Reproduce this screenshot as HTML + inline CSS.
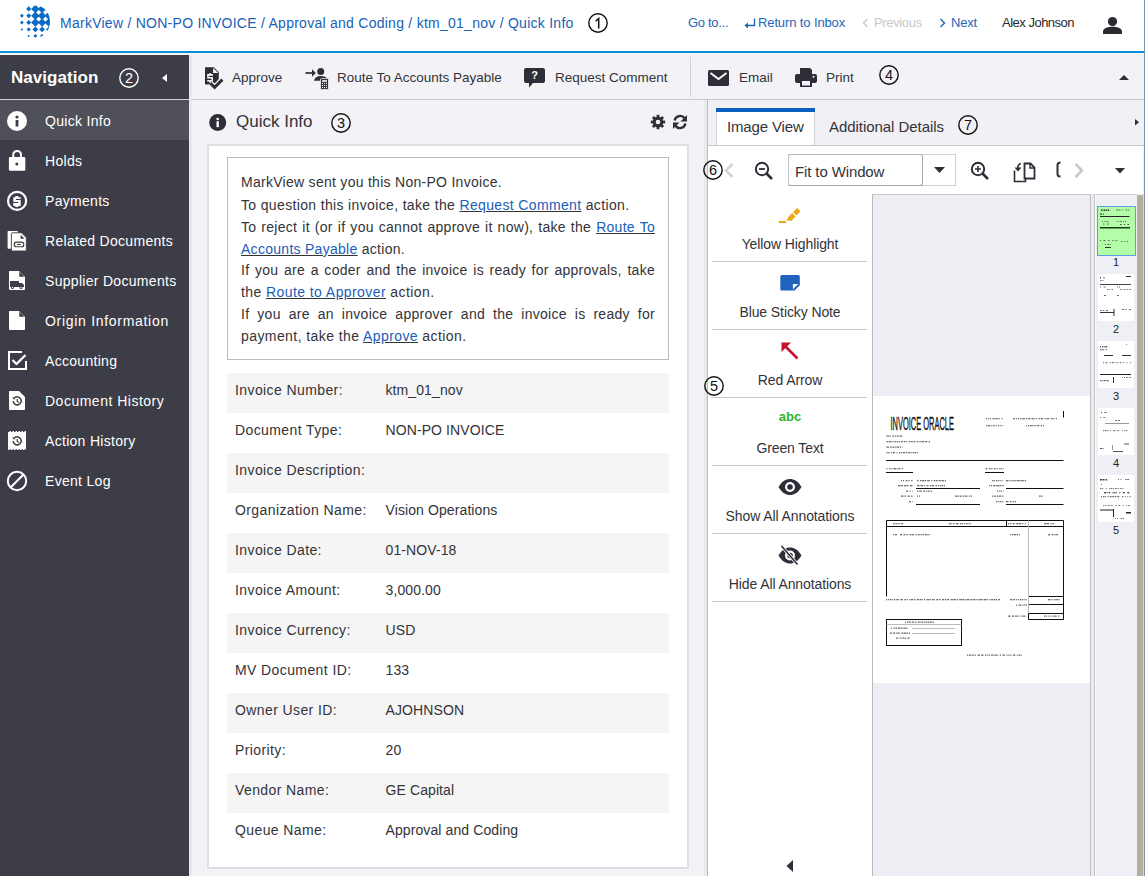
<!DOCTYPE html>
<html><head><meta charset="utf-8">
<style>
*{box-sizing:border-box;margin:0;padding:0}
html,body{width:1145px;height:876px;overflow:hidden;background:#f1f1f6;font-family:"Liberation Sans",sans-serif;color:#333338}
.abs{position:absolute}
.t{position:absolute;white-space:nowrap;line-height:1}
#hdr{position:absolute;left:0;top:0;width:1145px;height:51px;background:#fff}
#hline{position:absolute;left:0;top:51px;width:1145px;height:2px;background:#0a8fdf}
#hline2{position:absolute;left:0;top:53px;width:1145px;height:2px;background:#f7f6f2}
.crumb{color:#1862b6;font-size:14px;letter-spacing:0.26px}
.hl{color:#1e66b8;font-size:13px}
.circ{position:absolute;width:20px;height:20px;border:1.3px solid #111;border-radius:50%;font-size:15px;line-height:18px;text-align:center;color:#111;font-family:"Liberation Sans",sans-serif}
#nav{position:absolute;left:0;top:55px;width:189px;height:821px;background:#3d3d47}
#navh{position:absolute;left:0;top:0;width:189px;height:45px;border-bottom:1px solid #d0d0d4}
.ni{position:absolute;left:0;width:189px;height:40px}
.ni .lbl{position:absolute;left:45px;top:14px;font-size:14px;letter-spacing:0.3px;color:#fff;white-space:nowrap;line-height:1}
.ni svg{position:absolute;left:5px;top:10px}
#tb{position:absolute;left:192px;top:55px;width:953px;height:45px;background:#f2f2f7;border-bottom:1px solid #c9c9cd}
.tbt{position:absolute;top:16px;font-size:13.5px;color:#333338;white-space:nowrap;line-height:1}
#qi{position:absolute;left:189px;top:55px;width:515px;height:821px;background:#f2f2f7}
#qistrip{position:absolute;left:189px;top:55px;width:3px;height:821px;background:#e8e8eb}
#panel{position:absolute;left:207px;top:144px;width:482px;height:725px;background:#fff;border:2px solid #dedee3}
#msg{position:absolute;left:227px;top:157px;width:442px;height:203px;border:1px solid #b9b9bd;background:#fff}
.ml{position:absolute;width:414px;font-size:14px;letter-spacing:0.28px;white-space:nowrap;line-height:1;color:#333338}
.ml.j{text-align:justify;text-align-last:justify}
.ml a{color:#1a5eb8;text-decoration:underline;text-decoration-color:#333;text-underline-offset:1px}
.row{position:absolute;left:227px;width:442px;height:40px}
.row.g{background:#f5f5f5}
.row .k{position:absolute;left:8px;top:10px;font-size:14px;letter-spacing:0.4px;white-space:nowrap;line-height:1;color:#333338}
.row .v{position:absolute;left:158.5px;top:10px;font-size:14px;letter-spacing:0.1px;white-space:nowrap;line-height:1;color:#333338}
.al{left:708px;width:164px;text-align:center;font-size:14px;letter-spacing:-0.1px;color:#333338}
.thl{left:1095px;width:42px;text-align:center;font-size:11px;color:#222}
</style></head><body>
<div id="hdr">
  <svg class="abs" style="left:15px;top:3px" width="40" height="40" viewBox="0 0 40 40">
    <defs><clipPath id="lc"><ellipse cx="20.8" cy="18.6" rx="14.2" ry="16"/></clipPath></defs>
    <g fill="#0b6cc4"><path d="M13.70 3.30L16.30 5.90L13.70 8.50L11.10 5.90ZM6.85 10.85L8.80 12.80L6.85 14.75L4.90 12.80ZM13.70 10.30L16.20 12.80L13.70 15.30L11.20 12.80ZM6.85 17.65L8.80 19.60L6.85 21.55L4.90 19.60ZM13.70 17.10L16.20 19.60L13.70 22.10L11.20 19.60ZM6.85 25.15L8.10 26.40L6.85 27.65L5.60 26.40ZM13.70 24.35L15.75 26.40L13.70 28.45L11.65 26.40ZM13.70 31.90L14.90 33.10L13.70 34.30L12.50 33.10Z"/><path clip-path="url(#lc)" d="M20.35 1.65L24.60 5.90L20.35 10.15L16.10 5.90ZM27.10 1.65L31.35 5.90L27.10 10.15L22.85 5.90ZM33.85 1.65L38.10 5.90L33.85 10.15L29.60 5.90ZM20.35 8.55L24.60 12.80L20.35 17.05L16.10 12.80ZM27.10 8.55L31.35 12.80L27.10 17.05L22.85 12.80ZM33.85 8.55L38.10 12.80L33.85 17.05L29.60 12.80ZM20.35 15.35L24.60 19.60L20.35 23.85L16.10 19.60ZM27.10 15.35L31.35 19.60L27.10 23.85L22.85 19.60ZM33.85 15.35L38.10 19.60L33.85 23.85L29.60 19.60ZM20.35 23.50L23.25 26.40L20.35 29.30L17.45 26.40ZM27.10 23.50L30.00 26.40L27.10 29.30L24.20 26.40ZM33.85 23.50L36.75 26.40L33.85 29.30L30.95 26.40ZM20.35 31.10L22.35 33.10L20.35 35.10L18.35 33.10ZM27.10 30.90L29.30 33.10L27.10 35.30L24.90 33.10Z"/></g>
  </svg>
  <div class="t crumb" style="left:60px;top:16px">MarkView / NON-PO INVOICE / Approval and Coding / ktm_01_nov / Quick Info</div>
  <svg class="abs" style="left:586.9px;top:11.7px" width="22" height="22" viewBox="0 0 22 22"><circle cx="11" cy="11" r="9.2" fill="none" stroke="#111" stroke-width="1.4"/><path d="M8.6 9.3L11.7 6.4V16.6" fill="none" stroke="#111" stroke-width="1.5"/></svg>
  <div class="t hl" style="left:688px;top:16px;letter-spacing:-0.3px">Go to...</div>
  <svg class="abs" style="left:744px;top:18px" width="12" height="12" viewBox="0 0 12 12"><path d="M10.5 0.5V7.5H2.5" fill="none" stroke="#1e66b8" stroke-width="1.4"/><path d="M0.5 7.5L4 4.5V10.5Z" fill="#1e66b8"/></svg>
  <div class="t hl" style="left:758px;top:16px;letter-spacing:-0.12px">Return to Inbox</div>
  <svg class="abs" style="left:862px;top:18px" width="7" height="10" viewBox="0 0 7 10"><path d="M5.5 1L1.5 5L5.5 9" fill="none" stroke="#c8c8cc" stroke-width="1.4"/></svg>
  <div class="t hl" style="left:874px;top:16px;color:#c8c8cc;letter-spacing:-0.35px">Previous</div>
  <svg class="abs" style="left:939px;top:18px" width="7" height="10" viewBox="0 0 7 10"><path d="M1.5 1L5.5 5L1.5 9" fill="none" stroke="#1e66b8" stroke-width="1.4"/></svg>
  <div class="t hl" style="left:951px;top:16px;letter-spacing:-0.2px">Next</div>
  <div class="t" style="left:1002px;top:16px;font-size:13px;color:#2a2a30;letter-spacing:-0.5px">Alex Johnson</div>
  <svg class="abs" style="left:1103px;top:17px" width="19" height="17" viewBox="0 0 19 17"><circle cx="9.5" cy="4.6" r="4.6" fill="#2a2a30"/><path d="M0 17V14.5C0 11.5 4 9.8 9.5 9.8S19 11.5 19 14.5V17Z" fill="#2a2a30"/></svg>
</div>
<div id="hline"></div><div id="hline2"></div>
<div id="qi"></div><div id="qistrip"></div>
<div id="nav">
  <div id="navh">
    <div class="t" style="left:11px;top:14px;font-size:17px;font-weight:bold;color:#fff;letter-spacing:0.05px">Navigation</div>
    <svg class="abs" style="left:117.9px;top:12.0px" width="22" height="22" viewBox="0 0 22 22"><circle cx="11" cy="11" r="9.2" fill="none" stroke="#fff" stroke-width="1.4"/><text x="11" y="16.2" font-family="Liberation Sans" font-size="14.5" fill="#fff" text-anchor="middle">2</text></svg>
    <svg class="abs" style="left:162px;top:19px" width="5" height="8" viewBox="0 0 5 8"><path d="M5 0L0 4L5 8Z" fill="#fff"/></svg>
  </div>
  <div class="ni" style="top:45px;background:#50505a">
    <svg width="24" height="24" viewBox="0 0 24 24"><circle cx="12" cy="11" r="10" fill="#fff"/><rect x="10.6" y="10" width="2.8" height="6.5" fill="#3d3d47"/><circle cx="12" cy="7" r="1.6" fill="#3d3d47"/></svg>
    <div class="lbl">Quick Info</div>
  </div>
  <div class="ni" style="top:85px">
    <svg width="24" height="24" viewBox="0 0 24 24"><path d="M8.2 8V4.8a3.9 3.9 0 0 1 7.8 0V8" fill="none" stroke="#fff" stroke-width="2"/><rect x="3.9" y="7.1" width="16.4" height="13.7" rx="1.3" fill="#fff"/><circle cx="11.8" cy="14" r="1.5" fill="#3d3d47"/></svg>
    <div class="lbl">Holds</div>
  </div>
  <div class="ni" style="top:125px">
    <svg width="24" height="24" viewBox="0 0 24 24"><circle cx="12.1" cy="10.9" r="9.05" fill="none" stroke="#fff" stroke-width="2.2"/><path d="M10.3 5.9H13.4V7.3H15.7V15.9H13.4V17H10.3V15.9H8.3V7.3H10.3Z" fill="#fff"/><rect x="11" y="8.9" width="4.8" height="1.1" fill="#3d3d47"/><rect x="8.2" y="11.9" width="4.9" height="1.1" fill="#3d3d47"/></svg>
    <div class="lbl">Payments</div>
  </div>
  <div class="ni" style="top:165px">
    <svg width="24" height="24" viewBox="0 0 24 24"><rect x="2.6" y="1" width="10.3" height="17.8" rx="0.8" fill="#fff"/><path d="M7.2 2.8H16.5L21.3 7.6V20.2a0.8 0.8 0 0 1-0.8 0.8H7.2a0.8 0.8 0 0 1-0.8-0.8V3.6a0.8 0.8 0 0 1 0.8-0.8Z" fill="#fff" stroke="#3d3d47" stroke-width="0.9"/><path d="M15.6 4.7V8.8H19.5Z" fill="#3d3d47"/><rect x="9.2" y="12.1" width="9.6" height="4.6" rx="2.3" fill="none" stroke="#3d3d47" stroke-width="1.1"/><path d="M12 14.4H15.8" stroke="#3d3d47" stroke-width="1.1"/></svg>
    <div class="lbl">Related Documents</div>
  </div>
  <div class="ni" style="top:205px">
    <svg width="24" height="24" viewBox="0 0 24 24"><path d="M4 1H14L20 7V19a1 1 0 0 1-1 1H5a1 1 0 0 1-1-1Z" fill="#fff"/><path d="M14.3 1.6L19.4 6.7H14.3Z" fill="#3d3d47"/><path d="M5 11H14V17H5Z" fill="#3d3d47"/><path d="M14 13H17L19 15V17H14Z" fill="#3d3d47"/><circle cx="7.5" cy="17.5" r="1.6" fill="#3d3d47"/><circle cx="16" cy="17.5" r="1.6" fill="#3d3d47"/><circle cx="7.5" cy="17.5" r="0.7" fill="#fff"/><circle cx="16" cy="17.5" r="0.7" fill="#fff"/></svg>
    <div class="lbl">Supplier Documents</div>
  </div>
  <div class="ni" style="top:245px">
    <svg width="24" height="24" viewBox="0 0 24 24"><path d="M4 1H14L20 7V19a1 1 0 0 1-1 1H5a1 1 0 0 1-1-1Z" fill="#fff"/><path d="M14.3 1.6L19.4 6.7H14.3Z" fill="#3d3d47"/></svg>
    <div class="lbl" style="letter-spacing:0.7px">Origin Information</div>
  </div>
  <div class="ni" style="top:285px">
    <svg width="24" height="24" viewBox="0 0 24 24"><path d="M17 2H4V19H21V11" fill="none" stroke="#fff" stroke-width="2"/><path d="M7.5 10L11.5 14L20.5 5" fill="none" stroke="#fff" stroke-width="2.2"/></svg>
    <div class="lbl">Accounting</div>
  </div>
  <div class="ni" style="top:325px">
    <svg width="24" height="24" viewBox="0 0 24 24"><path d="M4 1H14L20 7V19a1 1 0 0 1-1 1H5a1 1 0 0 1-1-1Z" fill="#fff"/><path d="M8.2 11a4 4 0 1 0 1.2-3" fill="none" stroke="#3d3d47" stroke-width="1.5"/><path d="M7 7.5L9.8 7.2L9.5 10Z" fill="#3d3d47"/><path d="M12.2 9V11.5L14 12.5" fill="none" stroke="#3d3d47" stroke-width="1.2"/></svg>
    <div class="lbl" style="letter-spacing:0.5px">Document History</div>
  </div>
  <div class="ni" style="top:365px">
    <svg width="24" height="24" viewBox="0 0 24 24"><path d="M3 1H21V20H3Z" fill="#fff"/><path d="M3 1h1.5v1H3ZM6 1h1.5v1H6ZM9 1h1.5v1H9ZM12 1h1.5v1H12ZM15 1h1.5v1H15ZM18 1h1.5v1H18ZM4.5 19.2h1.5v0.8H4.5ZM7.5 19.2h1.5v0.8H7.5ZM10.5 19.2h1.5v0.8h-1.5ZM13.5 19.2h1.5v0.8h-1.5ZM16.5 19.2h1.5v0.8h-1.5ZM19.5 19.2h1.5v0.8h-1.5Z" fill="#3d3d47"/><path d="M8.2 11a4 4 0 1 0 1.2-3" fill="none" stroke="#3d3d47" stroke-width="1.5"/><path d="M7 7.5L9.8 7.2L9.5 10Z" fill="#3d3d47"/><path d="M12.2 9V11.5L14 12.5" fill="none" stroke="#3d3d47" stroke-width="1.2"/></svg>
    <div class="lbl">Action History</div>
  </div>
  <div class="ni" style="top:405px">
    <svg width="24" height="24" viewBox="0 0 24 24"><circle cx="12" cy="11" r="9.2" fill="none" stroke="#fff" stroke-width="2"/><path d="M5.8 17.2L18.2 4.8" stroke="#fff" stroke-width="2"/></svg>
    <div class="lbl">Event Log</div>
  </div>
</div>
<div id="tb">
  <svg class="abs" style="left:12px;top:12px" width="22" height="24" viewBox="0 0 22 24"><path d="M1 0.2H9.7L14.8 5.2V17.6H1Z" fill="#2e2e38"/><path d="M9.1 0.9V6.1H14.2Z" fill="#fff"/><path d="M5.4 6H6.8V7.1H8.9V8.7H4.6V10H8.9V14.6H6.8V15.8H5.4V14.6H3.2V13H7.4V11.6H3.2V7.1H5.4Z" fill="#fff"/><path d="M6.4 16.2L10.6 20.4L18.4 12.6" fill="none" stroke="#f2f2f7" stroke-width="5.6"/><path d="M6.4 16.2L10.6 20.4L18.4 12.6" fill="none" stroke="#2e2e38" stroke-width="2.9"/></svg>
  <div class="tbt" style="left:40px">Approve</div>
  <svg class="abs" style="left:113px;top:11px" width="25" height="24" viewBox="0 0 25 24"><path d="M0.5 7H8" stroke="#2e2e38" stroke-width="1.7"/><path d="M7 3.3L10.8 7L7 10.7Z" fill="#2e2e38"/><circle cx="15.7" cy="5.4" r="3.5" fill="#2e2e38"/><path d="M9 14.8C9.5 11.5 12 10 15.5 10S21.5 11 22.5 13V14.8Z" fill="#2e2e38"/><rect x="15.5" y="12.6" width="8" height="10.8" rx="0.8" fill="#2e2e38" stroke="#f2f2f7" stroke-width="0.8"/><rect x="17.1" y="14.2" width="4.8" height="1.6" fill="#fff"/><rect x="16.95" y="16.85" width="1.1" height="1.1" fill="#f2f2f7"/><rect x="18.85" y="16.85" width="1.1" height="1.1" fill="#f2f2f7"/><rect x="20.85" y="16.85" width="1.1" height="1.1" fill="#f2f2f7"/><rect x="16.95" y="18.95" width="1.1" height="1.1" fill="#f2f2f7"/><rect x="18.85" y="18.95" width="1.1" height="1.1" fill="#f2f2f7"/><rect x="20.85" y="18.95" width="1.1" height="1.1" fill="#f2f2f7"/><rect x="16.95" y="20.95" width="1.1" height="1.1" fill="#f2f2f7"/><rect x="18.85" y="20.95" width="1.1" height="1.1" fill="#f2f2f7"/><rect x="20.85" y="20.95" width="1.1" height="1.1" fill="#f2f2f7"/></svg>
  <div class="tbt" style="left:145px">Route To Accounts Payable</div>
  <svg class="abs" style="left:332px;top:13px" width="22" height="21" viewBox="0 0 22 21"><path d="M2 0H19a2 2 0 0 1 2 2V13a2 2 0 0 1-2 2H9L5 19.5V15H2a2 2 0 0 1-2-2V2a2 2 0 0 1 2-2Z" fill="#2e2e38"/><text x="10.5" y="11" font-family="Liberation Sans" font-weight="bold" font-size="11" fill="#fff" text-anchor="middle">?</text></svg>
  <div class="tbt" style="left:363px">Request Comment</div>
  <div class="abs" style="left:498px;top:2px;width:1px;height:40px;background:#d2d2d6"></div>
  <svg class="abs" style="left:516px;top:15px" width="21" height="16" viewBox="0 0 21 16"><rect x="0" y="0" width="21" height="16" rx="1.5" fill="#2e2e38"/><path d="M2.5 3L10.5 9L18.5 3" fill="none" stroke="#fff" stroke-width="1.8"/></svg>
  <div class="tbt" style="left:547px">Email</div>
  <svg class="abs" style="left:603px;top:13px" width="22" height="19" viewBox="0 0 22 19"><path d="M5 0H15L17 2V6H5Z" fill="#2e2e38"/><rect x="0" y="6" width="22" height="9" rx="2" fill="#2e2e38"/><rect x="5" y="12" width="12" height="7" fill="#2e2e38"/><rect x="7" y="13" width="8" height="4.5" fill="#f2f2f7"/><circle cx="18.5" cy="8.8" r="1" fill="#f2f2f7"/></svg>
  <div class="tbt" style="left:634px">Print</div>
  <svg class="abs" style="left:685.9px;top:9.0px" width="22" height="22" viewBox="0 0 22 22"><circle cx="11" cy="11" r="9.2" fill="none" stroke="#111" stroke-width="1.4"/><text x="11" y="16.2" font-family="Liberation Sans" font-size="14.5" fill="#111" text-anchor="middle">4</text></svg>
  <svg class="abs" style="left:927px;top:20px" width="10" height="5" viewBox="0 0 10 5"><path d="M0 5L5 0L10 5Z" fill="#2e2e38"/></svg>
</div>
<svg class="abs" style="left:209px;top:114px" width="18" height="18" viewBox="0 0 18 18"><circle cx="8.7" cy="8.5" r="8.5" fill="#2e2e38"/><rect x="7.5" y="7.3" width="2.4" height="5.8" fill="#fff"/><circle cx="8.7" cy="5" r="1.35" fill="#fff"/></svg>
<div class="t" style="left:236px;top:113px;font-size:17px;color:#333338">Quick Info</div>
<svg class="abs" style="left:330.0px;top:111.6px" width="22" height="22" viewBox="0 0 22 22"><circle cx="11" cy="11" r="9.2" fill="none" stroke="#111" stroke-width="1.4"/><text x="11" y="16.2" font-family="Liberation Sans" font-size="14.5" fill="#111" text-anchor="middle">3</text></svg>
<svg class="abs" style="left:650px;top:114px" width="16" height="16" viewBox="0 0 16 16"><g fill="#2e2e38"><circle cx="8" cy="8" r="5.2"/><rect x="6.6" y="0.8" width="2.8" height="14.4"/><rect x="6.6" y="0.8" width="2.8" height="14.4" transform="rotate(45 8 8)"/><rect x="6.6" y="0.8" width="2.8" height="14.4" transform="rotate(90 8 8)"/><rect x="6.6" y="0.8" width="2.8" height="14.4" transform="rotate(135 8 8)"/></g><circle cx="8" cy="8" r="2.3" fill="#f2f2f7"/></svg>
<svg class="abs" style="left:672px;top:114px" width="16" height="16" viewBox="0 0 16 16"><path d="M2.6 6.5A5.6 5.6 0 0 1 12.6 4.2" fill="none" stroke="#2e2e38" stroke-width="2.4"/><path d="M15 1V7.5H8.5Z" fill="#2e2e38"/><path d="M13.4 9.5A5.6 5.6 0 0 1 3.4 11.8" fill="none" stroke="#2e2e38" stroke-width="2.4"/><path d="M1 15V8.5H7.5Z" fill="#2e2e38"/></svg>
<div id="panel"></div>
<div id="msg"></div>
<div class="ml" style="left:241px;top:175.4px">MarkView sent you this Non-PO Invoice.</div>
<div class="ml" style="left:241px;top:197.6px;letter-spacing:0.35px">To question this invoice, take the <a>Request Comment</a> action.</div>
<div class="ml j" style="left:241px;top:220.3px">To reject it (or if you cannot approve it now), take the <a>Route To</a></div>
<div class="ml" style="left:241px;top:241.5px"><a>Accounts Payable</a> action.</div>
<div class="ml j" style="left:241px;top:263.2px">If you are a coder and the invoice is ready for approvals, take</div>
<div class="ml" style="left:241px;top:285.1px;letter-spacing:0.42px">the <a>Route to Approver</a> action.</div>
<div class="ml j" style="left:241px;top:307.4px">If you are an invoice approver and the invoice is ready for</div>
<div class="ml" style="left:241px;top:329px;letter-spacing:0.42px">payment, take the <a>Approve</a> action.</div>

<div class="row g" style="top:373px"><div class="k">Invoice Number:</div><div class="v">ktm_01_nov</div></div>
<div class="row" style="top:413px"><div class="k">Document Type:</div><div class="v">NON-PO INVOICE</div></div>
<div class="row g" style="top:453px"><div class="k">Invoice Description:</div></div>
<div class="row" style="top:493px"><div class="k">Organization Name:</div><div class="v">Vision Operations</div></div>
<div class="row g" style="top:533px"><div class="k">Invoice Date:</div><div class="v">01-NOV-18</div></div>
<div class="row" style="top:573px"><div class="k">Invoice Amount:</div><div class="v">3,000.00</div></div>
<div class="row g" style="top:613px"><div class="k">Invoice Currency:</div><div class="v">USD</div></div>
<div class="row" style="top:653px"><div class="k">MV Document ID:</div><div class="v">133</div></div>
<div class="row g" style="top:693px"><div class="k">Owner User ID:</div><div class="v">AJOHNSON</div></div>
<div class="row" style="top:733px"><div class="k">Priority:</div><div class="v">20</div></div>
<div class="row g" style="top:773px"><div class="k">Vendor Name:</div><div class="v">GE Capital</div></div>
<div class="row" style="top:813px"><div class="k">Queue Name:</div><div class="v">Approval and Coding</div></div>
<div class="abs" style="left:704px;top:100px;width:441px;height:776px;background:#f0f0f5"></div>
<div class="abs" style="left:704px;top:100px;width:3px;height:776px;background:#e9e9ea"></div>
<div class="abs" style="left:707px;top:100px;width:1px;height:776px;background:#bdbdc1"></div>
<div class="abs" style="left:708px;top:145px;width:437px;height:1px;background:#c8c8cc"></div>
<div class="abs" style="left:716px;top:108px;width:99px;height:37px;background:#fff;border-left:1px solid #d4d4d8;border-right:1px solid #d4d4d8"></div>
<div class="abs" style="left:716px;top:108px;width:99px;height:3.5px;background:#0b5fc1"></div>
<div class="t" style="left:727px;top:119px;font-size:15px;letter-spacing:-0.15px;color:#333338">Image View</div>
<div class="t" style="left:829px;top:119px;font-size:15px;letter-spacing:-0.05px;color:#333338">Additional Details</div>
<svg class="abs" style="left:956.7px;top:113.9px" width="22" height="22" viewBox="0 0 22 22"><circle cx="11" cy="11" r="9.2" fill="none" stroke="#111" stroke-width="1.4"/><text x="11" y="16.2" font-family="Liberation Sans" font-size="14.5" fill="#111" text-anchor="middle">7</text></svg>
<svg class="abs" style="left:1134.5px;top:119px" width="4" height="6.5" viewBox="0 0 4 6.5"><path d="M0 0L4 3.25L0 6.5Z" fill="#2e2e38"/></svg>
<!-- image toolbar -->
<div class="abs" style="left:708px;top:146px;width:435px;height:48px;background:#fff"></div>
<svg class="abs" style="left:701.8px;top:158.9px" width="22" height="22" viewBox="0 0 22 22"><circle cx="11" cy="11" r="9.2" fill="none" stroke="#111" stroke-width="1.4"/><text x="11" y="16.2" font-family="Liberation Sans" font-size="14.5" fill="#111" text-anchor="middle">6</text></svg>
<svg class="abs" style="left:723px;top:163px" width="11" height="15" viewBox="0 0 11 15"><path d="M9.5 1L3 7.5L9.5 14" fill="none" stroke="#d4d4d8" stroke-width="2.6"/></svg>
<svg class="abs" style="left:754px;top:161px" width="20" height="20" viewBox="0 0 20 20"><circle cx="8" cy="8" r="6.2" fill="none" stroke="#2e2e38" stroke-width="2"/><path d="M5 8H11" stroke="#2e2e38" stroke-width="1.8"/><path d="M12.5 12.5L18 18" stroke="#2e2e38" stroke-width="2.6"/></svg>
<div class="abs" style="left:788px;top:154px;width:168px;height:32px;border:1px solid #d0d0d4;background:#fff"></div>
<div class="abs" style="left:788px;top:154px;width:135px;height:32px;border:1.5px solid #a8a8ac;border-radius:3px;border-top-color:#b8b8bc;border-left-color:#c4c4c8"></div>
<div class="t" style="left:795px;top:164px;font-size:15px;letter-spacing:-0.12px;color:#333338">Fit to Window</div>
<svg class="abs" style="left:934px;top:167px" width="11" height="7" viewBox="0 0 11 7"><path d="M0 0H11L5.5 6Z" fill="#2e2e38"/></svg>
<svg class="abs" style="left:970px;top:161px" width="20" height="20" viewBox="0 0 20 20"><circle cx="8" cy="8" r="6.2" fill="none" stroke="#2e2e38" stroke-width="2"/><path d="M5 8H11M8 5V11" stroke="#2e2e38" stroke-width="1.6"/><path d="M12.5 12.5L18 18" stroke="#2e2e38" stroke-width="2.6"/></svg>
<svg class="abs" style="left:1013px;top:159px" width="24" height="24" viewBox="0 0 24 24"><path d="M1.5 11.5V22.5H12.5V20" fill="none" stroke="#2e2e38" stroke-width="1.6"/><path d="M8 4.5a4 4 0 0 0 -3 5" fill="none" stroke="#2e2e38" stroke-width="1.6"/><path d="M1.5 8.5H8.5L5 12.5Z" fill="#2e2e38"/><path d="M11.5 4.5H17.5L21.5 8.5V19.5H11.5Z" fill="none" stroke="#2e2e38" stroke-width="1.8"/><path d="M17 4.5V9H21.5" fill="none" stroke="#2e2e38" stroke-width="1.4"/></svg>
<svg class="abs" style="left:1056px;top:161px" width="6" height="17" viewBox="0 0 6 17"><path d="M4.5 1.5Q1.5 1.5 1.5 4V13Q1.5 15.5 4.5 15.5" fill="none" stroke="#2e2e38" stroke-width="2"/></svg>
<svg class="abs" style="left:1074px;top:163px" width="11" height="15" viewBox="0 0 11 15"><path d="M1.5 1L8 7.5L1.5 14" fill="none" stroke="#c8c8cc" stroke-width="2.6"/></svg>
<svg class="abs" style="left:1115px;top:168px" width="10" height="6" viewBox="0 0 10 6"><path d="M0 0H10L5 5.5Z" fill="#2e2e38"/></svg>
<!-- annotation column -->
<div class="abs" style="left:708px;top:194px;width:164px;height:682px;background:#fff"></div>
<div class="abs" style="left:712px;top:261px;width:155px;height:1px;background:#c6c6ca"></div>
<div class="abs" style="left:712px;top:329px;width:155px;height:1px;background:#c6c6ca"></div>
<div class="abs" style="left:712px;top:397px;width:155px;height:1px;background:#c6c6ca"></div>
<div class="abs" style="left:712px;top:465px;width:155px;height:1px;background:#c6c6ca"></div>
<div class="abs" style="left:712px;top:533px;width:155px;height:1px;background:#c6c6ca"></div>
<div class="abs" style="left:712px;top:601px;width:155px;height:1px;background:#c6c6ca"></div>
<svg class="abs" style="left:778px;top:207px" width="24" height="17" viewBox="0 0 24 17"><g fill="#eaa912"><path d="M0.8 14.1H7.6L8.4 15.9H0.8Z"/><path d="M8 13.6L10 11.6V10.2L14.1 6.1L17.5 9.5L13.6 13.8Z"/><path d="M15 5.1L19.1 1L22.5 4.3L18.4 8.4Z"/></g></svg>
<div class="t al" style="top:237px">Yellow Highlight</div>
<svg class="abs" style="left:780px;top:274px" width="21" height="18" viewBox="0 0 21 18"><path d="M1.8 1H18.3a1.5 1.5 0 0 1 1.5 1.5V11.2L14.5 16.5H1.8a1.5 1.5 0 0 1-1.5-1.5V2.5a1.5 1.5 0 0 1 1.5-1.5Z" fill="#1f63bd"/><path d="M12.9 9.9V15.2L18.2 9.9Z" fill="#fff"/></svg>
<div class="t al" style="top:305px">Blue Sticky Note</div>
<svg class="abs" style="left:781px;top:342px" width="18" height="18" viewBox="0 0 18 18"><path d="M3 3L16.5 16.5" stroke="#c41230" stroke-width="2.6"/><path d="M0.5 0.5H10L0.5 10Z" fill="#c41230"/></svg>
<div class="t al" style="top:373px">Red Arrow</div>
<svg class="abs" style="left:703.0px;top:375.3px" width="22" height="22" viewBox="0 0 22 22"><circle cx="11" cy="11" r="9.2" fill="none" stroke="#111" stroke-width="1.4"/><text x="11" y="16.2" font-family="Liberation Sans" font-size="14.5" fill="#111" text-anchor="middle">5</text></svg>
<div class="t" style="left:708px;width:164px;text-align:center;top:410px;font-size:13px;font-weight:bold;color:#2db52d">abc</div>
<div class="t al" style="top:441px">Green Text</div>
<svg class="abs" style="left:778px;top:478px" width="24" height="18" viewBox="0 0 24 18"><path d="M0.5 9C4 3 8 1 12 1S20 3 23.5 9C20 15 16 17 12 17S4 15 0.5 9Z" fill="#2e2e38"/><circle cx="12" cy="9" r="5" fill="#fff"/><circle cx="12" cy="9" r="2.8" fill="#2e2e38"/></svg>
<div class="t al" style="top:509px">Show All Annotations</div>
<svg class="abs" style="left:778px;top:545px" width="24" height="21" viewBox="0 0 24 21"><path d="M0.5 10.5C4 4.5 8 2.5 12 2.5S20 4.5 23.5 10.5C20 16.5 16 18.5 12 18.5S4 16.5 0.5 10.5Z" fill="#2e2e38"/><circle cx="12" cy="10.5" r="5" fill="#fff"/><circle cx="12" cy="10.5" r="2.8" fill="#2e2e38"/><path d="M3.5 1L19.5 19.5" stroke="#fff" stroke-width="3.2"/><path d="M3.5 1L19.5 19.5" stroke="#2e2e38" stroke-width="1.6"/></svg>
<div class="t al" style="top:577px">Hide All Annotations</div>
<svg class="abs" style="left:786px;top:860px" width="7" height="12" viewBox="0 0 7 12"><path d="M7 0L0.5 6L7 12Z" fill="#2e2e38"/></svg>
<!-- viewport -->
<div class="abs" style="left:872px;top:194px;width:219px;height:682px;background:#eceef3;border-left:1px solid #b8b8bc;border-top:1px solid #c8c8cc;border-right:1px solid #c0c0c4"></div>
<div class="abs" style="left:1091px;top:194px;width:3px;height:682px;background:#ececee"></div>
<div class="abs" style="left:1094px;top:194px;width:1px;height:682px;background:#c4c4c8"></div>
<div class="abs" style="left:1095px;top:194px;width:42px;height:682px;background:#eef0f5;border-top:1px solid #d0d0d4;border-left:1px solid #fafafa"></div>
<div class="abs" style="left:1137px;top:195px;width:6px;height:681px;background:#b7af9d"></div>
<div class="abs" style="left:1143px;top:194px;width:1px;height:682px;background:#d8d8dc"></div><div class="abs" style="left:1144px;top:0px;width:1px;height:876px;background:#7d91ae"></div>
<svg class="abs" style="left:873px;top:396px" width="217" height="287" viewBox="873 396 217 287">
<rect x="873" y="396" width="217" height="287" fill="#fff"/>
<text x="890.5" y="429.6" font-family="Liberation Sans" font-size="17.5" textLength="63.5" lengthAdjust="spacingAndGlyphs" fill="#111" stroke="#111" stroke-width="0.35">INVOICE ORACLE</text>
<g fill="#222" opacity="0.65"><rect x="986.0" y="418.0" width="1.0" height="1.3"/><rect x="987.8" y="418.0" width="1.0" height="1.3"/><rect x="989.8" y="418.0" width="1.2" height="1.3"/><rect x="992.5" y="418.0" width="2.0" height="1.3"/><rect x="995.3" y="418.0" width="2.5" height="1.3"/><rect x="998.6" y="418.0" width="1.2" height="1.3"/><rect x="1001.3" y="418.0" width="1.2" height="1.3"/></g>
<g fill="#222" opacity="0.65"><rect x="986.0" y="425.0" width="1.0" height="1.3"/><rect x="987.8" y="425.0" width="2.5" height="1.3"/><rect x="991.3" y="425.0" width="1.0" height="1.3"/><rect x="993.3" y="425.0" width="1.5" height="1.3"/><rect x="995.6" y="425.0" width="1.0" height="1.3"/><rect x="998.1" y="425.0" width="1.2" height="1.3"/><rect x="1000.3" y="425.0" width="1.0" height="1.3"/><rect x="1002.3" y="425.0" width="0.7" height="1.3"/></g>
<g fill="#222" opacity="0.65"><rect x="1013.0" y="418.0" width="2.0" height="1.3"/><rect x="1016.0" y="418.0" width="1.0" height="1.3"/><rect x="1018.0" y="418.0" width="1.0" height="1.3"/><rect x="1020.0" y="418.0" width="1.5" height="1.3"/><rect x="1022.3" y="418.0" width="2.5" height="1.3"/><rect x="1025.8" y="418.0" width="1.2" height="1.3"/><rect x="1027.8" y="418.0" width="2.5" height="1.3"/><rect x="1031.3" y="418.0" width="2.5" height="1.3"/><rect x="1034.3" y="418.0" width="1.0" height="1.3"/><rect x="1036.1" y="418.0" width="1.0" height="1.3"/><rect x="1038.6" y="418.0" width="1.5" height="1.3"/><rect x="1040.6" y="418.0" width="2.5" height="1.3"/><rect x="1044.6" y="418.0" width="1.2" height="1.3"/><rect x="1046.6" y="418.0" width="2.5" height="1.3"/><rect x="1050.6" y="418.0" width="1.0" height="1.3"/><rect x="1052.1" y="418.0" width="1.0" height="1.3"/><rect x="1053.6" y="418.0" width="1.0" height="1.3"/><rect x="1056.1" y="418.0" width="0.9" height="1.3"/></g>
<g fill="#222" opacity="0.65"><rect x="1026.0" y="425.0" width="1.0" height="1.3"/><rect x="1028.0" y="425.0" width="1.5" height="1.3"/><rect x="1030.3" y="425.0" width="2.5" height="1.3"/><rect x="1033.8" y="425.0" width="1.2" height="1.3"/><rect x="1035.5" y="425.0" width="1.0" height="1.3"/><rect x="1037.3" y="425.0" width="2.0" height="1.3"/><rect x="1040.8" y="425.0" width="1.2" height="1.3"/><rect x="1042.8" y="425.0" width="1.2" height="1.3"/></g>
<g fill="#222" opacity="0.65"><rect x="886.5" y="435.5" width="2.5" height="1.3"/><rect x="889.5" y="435.5" width="1.2" height="1.3"/><rect x="892.2" y="435.5" width="1.5" height="1.3"/><rect x="894.7" y="435.5" width="1.2" height="1.3"/><rect x="896.7" y="435.5" width="2.0" height="1.3"/><rect x="899.7" y="435.5" width="2.5" height="1.3"/></g>
<g fill="#222" opacity="0.65"><rect x="886.5" y="441.0" width="2.0" height="1.3"/><rect x="889.0" y="441.0" width="2.5" height="1.3"/><rect x="892.5" y="441.0" width="1.0" height="1.3"/><rect x="894.5" y="441.0" width="1.5" height="1.3"/><rect x="896.5" y="441.0" width="1.2" height="1.3"/><rect x="898.5" y="441.0" width="1.5" height="1.3"/><rect x="901.0" y="441.0" width="2.0" height="1.3"/><rect x="904.0" y="441.0" width="1.5" height="1.3"/><rect x="906.3" y="441.0" width="1.0" height="1.3"/><rect x="908.8" y="441.0" width="1.5" height="1.3"/><rect x="911.1" y="441.0" width="1.5" height="1.3"/><rect x="913.4" y="441.0" width="2.0" height="1.3"/><rect x="916.9" y="441.0" width="1.5" height="1.3"/><rect x="919.4" y="441.0" width="1.2" height="1.3"/><rect x="921.4" y="441.0" width="2.5" height="1.3"/><rect x="924.7" y="441.0" width="2.5" height="1.3"/><rect x="928.7" y="441.0" width="1.3" height="1.3"/></g>
<g fill="#222" opacity="0.65"><rect x="886.5" y="446.5" width="2.5" height="1.3"/><rect x="890.0" y="446.5" width="1.5" height="1.3"/><rect x="892.3" y="446.5" width="2.0" height="1.3"/><rect x="895.1" y="446.5" width="1.0" height="1.3"/><rect x="896.6" y="446.5" width="2.5" height="1.3"/><rect x="899.9" y="446.5" width="1.2" height="1.3"/><rect x="902.1" y="446.5" width="0.4" height="1.3"/></g>
<g fill="#222" opacity="0.65"><rect x="886.5" y="452.0" width="1.2" height="1.3"/><rect x="888.2" y="452.0" width="1.5" height="1.3"/><rect x="891.2" y="452.0" width="1.0" height="1.3"/><rect x="893.0" y="452.0" width="2.0" height="1.3"/><rect x="896.5" y="452.0" width="1.0" height="1.3"/><rect x="899.0" y="452.0" width="1.0" height="1.3"/><rect x="900.5" y="452.0" width="1.5" height="1.3"/><rect x="902.8" y="452.0" width="2.5" height="1.3"/><rect x="906.1" y="452.0" width="1.0" height="1.3"/><rect x="907.9" y="452.0" width="2.0" height="1.3"/><rect x="910.7" y="452.0" width="1.0" height="1.3"/><rect x="912.5" y="452.0" width="1.2" height="1.3"/><rect x="914.2" y="452.0" width="2.0" height="1.3"/><rect x="917.2" y="452.0" width="0.8" height="1.3"/></g>
<g fill="#222" opacity="0.65"><rect x="886.5" y="468.0" width="1.0" height="1.3"/><rect x="889.0" y="468.0" width="1.5" height="1.3"/><rect x="891.5" y="468.0" width="1.0" height="1.3"/><rect x="893.5" y="468.0" width="2.5" height="1.3"/><rect x="896.5" y="468.0" width="1.0" height="1.3"/><rect x="898.3" y="468.0" width="2.0" height="1.3"/><rect x="901.8" y="468.0" width="1.2" height="1.3"/></g>
<g fill="#222" opacity="0.65"><rect x="985.5" y="468.0" width="2.0" height="1.3"/><rect x="989.0" y="468.0" width="1.5" height="1.3"/><rect x="991.3" y="468.0" width="1.2" height="1.3"/><rect x="994.0" y="468.0" width="1.5" height="1.3"/><rect x="996.5" y="468.0" width="1.2" height="1.3"/><rect x="999.2" y="468.0" width="1.2" height="1.3"/><rect x="1000.9" y="468.0" width="1.2" height="1.3"/><rect x="1002.9" y="468.0" width="0.6" height="1.3"/></g>
<g fill="#222" opacity="0.65"><rect x="901.0" y="480.0" width="1.0" height="1.3"/><rect x="903.0" y="480.0" width="1.0" height="1.3"/><rect x="905.5" y="480.0" width="2.0" height="1.3"/><rect x="908.5" y="480.0" width="1.2" height="1.3"/><rect x="911.2" y="480.0" width="1.3" height="1.3"/></g>
<g fill="#222" opacity="0.65"><rect x="898.0" y="485.0" width="2.0" height="1.3"/><rect x="900.5" y="485.0" width="2.5" height="1.3"/><rect x="904.0" y="485.0" width="2.0" height="1.3"/><rect x="906.5" y="485.0" width="2.0" height="1.3"/><rect x="910.0" y="485.0" width="2.5" height="1.3"/></g>
<g fill="#222" opacity="0.65"><rect x="906.0" y="490.5" width="2.0" height="1.3"/><rect x="909.5" y="490.5" width="1.0" height="1.3"/><rect x="912.0" y="490.5" width="0.5" height="1.3"/></g>
<g fill="#222" opacity="0.65"><rect x="901.0" y="495.5" width="2.5" height="1.3"/><rect x="904.5" y="495.5" width="1.5" height="1.3"/><rect x="907.5" y="495.5" width="2.5" height="1.3"/><rect x="911.0" y="495.5" width="1.5" height="1.3"/></g>
<g fill="#222" opacity="0.65"><rect x="909.0" y="501.0" width="2.0" height="1.3"/><rect x="912.0" y="501.0" width="0.5" height="1.3"/></g>
<g fill="#222" opacity="0.65"><rect x="917.0" y="480.0" width="1.5" height="1.3"/><rect x="920.0" y="480.0" width="1.5" height="1.3"/><rect x="922.0" y="480.0" width="2.5" height="1.3"/><rect x="925.0" y="480.0" width="1.2" height="1.3"/><rect x="927.2" y="480.0" width="2.5" height="1.3"/><rect x="931.2" y="480.0" width="1.0" height="1.3"/><rect x="933.7" y="480.0" width="1.5" height="1.3"/><rect x="935.7" y="480.0" width="2.0" height="1.3"/><rect x="938.7" y="480.0" width="2.0" height="1.3"/><rect x="941.5" y="480.0" width="2.5" height="1.3"/><rect x="944.8" y="480.0" width="1.2" height="1.3"/></g>
<g fill="#222" opacity="0.65"><rect x="917.0" y="485.0" width="2.5" height="1.3"/><rect x="920.5" y="485.0" width="2.5" height="1.3"/><rect x="923.8" y="485.0" width="1.2" height="1.3"/><rect x="926.5" y="485.0" width="2.0" height="1.3"/><rect x="930.0" y="485.0" width="1.5" height="1.3"/><rect x="932.0" y="485.0" width="2.0" height="1.3"/><rect x="935.5" y="485.0" width="1.5" height="1.3"/><rect x="938.0" y="485.0" width="1.2" height="1.3"/><rect x="940.0" y="485.0" width="1.5" height="1.3"/><rect x="942.0" y="485.0" width="1.2" height="1.3"/><rect x="944.0" y="485.0" width="1.0" height="1.3"/></g>
<g fill="#222" opacity="0.65"><rect x="917.0" y="490.5" width="1.2" height="1.3"/><rect x="919.2" y="490.5" width="2.5" height="1.3"/><rect x="923.2" y="490.5" width="2.0" height="1.3"/><rect x="926.2" y="490.5" width="1.0" height="1.3"/><rect x="927.7" y="490.5" width="2.0" height="1.3"/><rect x="930.7" y="490.5" width="1.3" height="1.3"/></g>
<g fill="#222" opacity="0.65"><rect x="917.0" y="495.5" width="1.0" height="1.3"/><rect x="919.0" y="495.5" width="1.0" height="1.3"/></g>
<g fill="#222" opacity="0.65"><rect x="955.0" y="495.5" width="2.0" height="1.3"/><rect x="957.5" y="495.5" width="1.5" height="1.3"/><rect x="959.8" y="495.5" width="2.0" height="1.3"/><rect x="962.6" y="495.5" width="1.5" height="1.3"/><rect x="964.9" y="495.5" width="2.5" height="1.3"/><rect x="968.9" y="495.5" width="1.2" height="1.3"/><rect x="970.9" y="495.5" width="1.1" height="1.3"/></g>
<g fill="#222" opacity="0.65"><rect x="992.0" y="480.0" width="1.2" height="1.3"/><rect x="993.7" y="480.0" width="1.2" height="1.3"/><rect x="995.9" y="480.0" width="1.2" height="1.3"/><rect x="997.6" y="480.0" width="1.2" height="1.3"/><rect x="999.6" y="480.0" width="1.0" height="1.3"/><rect x="1001.6" y="480.0" width="1.0" height="1.3"/><rect x="1003.4" y="480.0" width="0.1" height="1.3"/></g>
<g fill="#222" opacity="0.65"><rect x="989.0" y="485.0" width="1.0" height="1.3"/><rect x="990.8" y="485.0" width="1.2" height="1.3"/><rect x="993.0" y="485.0" width="2.5" height="1.3"/><rect x="996.3" y="485.0" width="2.5" height="1.3"/><rect x="999.3" y="485.0" width="2.0" height="1.3"/><rect x="1002.1" y="485.0" width="1.4" height="1.3"/></g>
<g fill="#222" opacity="0.65"><rect x="997.0" y="490.5" width="1.2" height="1.3"/><rect x="999.2" y="490.5" width="1.0" height="1.3"/><rect x="1000.7" y="490.5" width="1.2" height="1.3"/><rect x="1002.9" y="490.5" width="0.6" height="1.3"/></g>
<g fill="#222" opacity="0.65"><rect x="992.0" y="495.5" width="1.0" height="1.3"/><rect x="993.8" y="495.5" width="2.0" height="1.3"/><rect x="996.6" y="495.5" width="1.5" height="1.3"/><rect x="998.6" y="495.5" width="2.5" height="1.3"/><rect x="1001.9" y="495.5" width="1.5" height="1.3"/></g>
<g fill="#222" opacity="0.65"><rect x="996.0" y="501.0" width="1.5" height="1.3"/><rect x="998.3" y="501.0" width="1.0" height="1.3"/><rect x="999.8" y="501.0" width="1.2" height="1.3"/><rect x="1001.5" y="501.0" width="1.2" height="1.3"/><rect x="1003.2" y="501.0" width="0.3" height="1.3"/></g>
<g fill="#222" opacity="0.65"><rect x="1006.0" y="480.0" width="2.5" height="1.3"/><rect x="1009.5" y="480.0" width="1.0" height="1.3"/><rect x="1011.3" y="480.0" width="1.5" height="1.3"/><rect x="1013.6" y="480.0" width="2.0" height="1.3"/><rect x="1016.6" y="480.0" width="2.5" height="1.3"/><rect x="1019.6" y="480.0" width="1.2" height="1.3"/><rect x="1021.3" y="480.0" width="2.5" height="1.3"/><rect x="1024.6" y="480.0" width="1.4" height="1.3"/></g>
<g fill="#222" opacity="0.65"><rect x="1039.0" y="495.5" width="1.5" height="1.3"/><rect x="1041.0" y="495.5" width="1.5" height="1.3"/></g>
<g fill="#222" opacity="0.65"><rect x="1006.0" y="501.0" width="2.5" height="1.3"/><rect x="1010.0" y="501.0" width="1.5" height="1.3"/><rect x="1012.5" y="501.0" width="1.2" height="1.3"/><rect x="1014.7" y="501.0" width="1.3" height="1.3"/></g>
<g fill="#222" opacity="0.65"><rect x="893.0" y="523.0" width="1.5" height="1.3"/><rect x="895.3" y="523.0" width="1.5" height="1.3"/><rect x="897.3" y="523.0" width="1.0" height="1.3"/><rect x="899.1" y="523.0" width="1.2" height="1.3"/><rect x="901.3" y="523.0" width="1.7" height="1.3"/></g>
<g fill="#222" opacity="0.65"><rect x="949.0" y="523.0" width="2.5" height="1.3"/><rect x="953.0" y="523.0" width="1.5" height="1.3"/><rect x="956.0" y="523.0" width="2.5" height="1.3"/><rect x="960.0" y="523.0" width="1.2" height="1.3"/><rect x="961.7" y="523.0" width="1.2" height="1.3"/><rect x="963.9" y="523.0" width="1.2" height="1.3"/><rect x="966.1" y="523.0" width="1.5" height="1.3"/><rect x="968.4" y="523.0" width="1.0" height="1.3"/><rect x="970.2" y="523.0" width="0.8" height="1.3"/></g>
<g fill="#222" opacity="0.65"><rect x="1008.0" y="523.0" width="1.2" height="1.3"/><rect x="1010.0" y="523.0" width="1.2" height="1.3"/><rect x="1012.7" y="523.0" width="2.0" height="1.3"/><rect x="1016.2" y="523.0" width="2.0" height="1.3"/><rect x="1018.7" y="523.0" width="2.5" height="1.3"/><rect x="1022.2" y="523.0" width="1.0" height="1.3"/><rect x="1024.7" y="523.0" width="1.0" height="1.3"/></g>
<g fill="#222" opacity="0.65"><rect x="1044.0" y="523.0" width="2.5" height="1.3"/><rect x="1047.0" y="523.0" width="2.0" height="1.3"/><rect x="1050.5" y="523.0" width="1.2" height="1.3"/><rect x="1052.5" y="523.0" width="1.5" height="1.3"/></g>
<g fill="#222" opacity="0.65"><rect x="893.0" y="534.0" width="1.2" height="1.3"/><rect x="895.0" y="534.0" width="2.0" height="1.3"/></g>
<g fill="#222" opacity="0.65"><rect x="900.0" y="534.0" width="2.0" height="1.3"/><rect x="903.5" y="534.0" width="2.0" height="1.3"/><rect x="906.5" y="534.0" width="1.5" height="1.3"/><rect x="909.5" y="534.0" width="2.0" height="1.3"/><rect x="912.0" y="534.0" width="2.0" height="1.3"/><rect x="915.5" y="534.0" width="1.2" height="1.3"/><rect x="917.5" y="534.0" width="1.2" height="1.3"/><rect x="919.2" y="534.0" width="1.2" height="1.3"/><rect x="921.2" y="534.0" width="1.2" height="1.3"/><rect x="922.9" y="534.0" width="1.2" height="1.3"/><rect x="925.1" y="534.0" width="2.5" height="1.3"/><rect x="928.1" y="534.0" width="1.0" height="1.3"/><rect x="930.6" y="534.0" width="0.4" height="1.3"/></g>
<g fill="#222" opacity="0.65"><rect x="1010.0" y="534.0" width="1.0" height="1.3"/><rect x="1011.8" y="534.0" width="1.5" height="1.3"/><rect x="1013.8" y="534.0" width="2.5" height="1.3"/><rect x="1016.8" y="534.0" width="1.2" height="1.3"/><rect x="1019.0" y="534.0" width="1.0" height="1.3"/></g>
<g fill="#222" opacity="0.65"><rect x="1048.0" y="534.0" width="2.0" height="1.3"/><rect x="1051.5" y="534.0" width="2.0" height="1.3"/><rect x="1054.5" y="534.0" width="1.2" height="1.3"/><rect x="1056.2" y="534.0" width="1.8" height="1.3"/></g>
<g fill="#222" opacity="0.65"><rect x="886.0" y="599.0" width="1.2" height="1.3"/><rect x="888.0" y="599.0" width="1.2" height="1.3"/><rect x="890.0" y="599.0" width="1.5" height="1.3"/><rect x="892.3" y="599.0" width="1.0" height="1.3"/><rect x="894.1" y="599.0" width="1.2" height="1.3"/><rect x="896.3" y="599.0" width="2.5" height="1.3"/><rect x="900.3" y="599.0" width="2.5" height="1.3"/><rect x="904.3" y="599.0" width="1.5" height="1.3"/><rect x="906.6" y="599.0" width="1.2" height="1.3"/><rect x="909.3" y="599.0" width="1.2" height="1.3"/><rect x="911.0" y="599.0" width="2.0" height="1.3"/><rect x="913.8" y="599.0" width="1.5" height="1.3"/><rect x="916.8" y="599.0" width="2.5" height="1.3"/><rect x="919.8" y="599.0" width="1.2" height="1.3"/><rect x="921.5" y="599.0" width="1.5" height="1.3"/><rect x="924.0" y="599.0" width="1.2" height="1.3"/><rect x="926.7" y="599.0" width="2.5" height="1.3"/><rect x="929.7" y="599.0" width="1.5" height="1.3"/><rect x="932.2" y="599.0" width="2.5" height="1.3"/><rect x="936.2" y="599.0" width="2.0" height="1.3"/><rect x="939.0" y="599.0" width="1.5" height="1.3"/><rect x="942.0" y="599.0" width="2.0" height="1.3"/><rect x="944.8" y="599.0" width="1.5" height="1.3"/><rect x="947.1" y="599.0" width="2.0" height="1.3"/><rect x="950.6" y="599.0" width="2.5" height="1.3"/><rect x="953.6" y="599.0" width="2.5" height="1.3"/><rect x="957.1" y="599.0" width="1.2" height="1.3"/><rect x="959.3" y="599.0" width="2.5" height="1.3"/><rect x="962.3" y="599.0" width="2.0" height="1.3"/><rect x="965.3" y="599.0" width="1.2" height="1.3"/><rect x="967.0" y="599.0" width="2.0" height="1.3"/><rect x="969.8" y="599.0" width="2.0" height="1.3"/><rect x="972.6" y="599.0" width="2.5" height="1.3"/><rect x="975.6" y="599.0" width="1.2" height="1.3"/><rect x="977.6" y="599.0" width="2.0" height="1.3"/><rect x="980.1" y="599.0" width="2.5" height="1.3"/><rect x="983.6" y="599.0" width="2.5" height="1.3"/><rect x="986.6" y="599.0" width="1.5" height="1.3"/><rect x="989.6" y="599.0" width="1.2" height="1.3"/><rect x="991.3" y="599.0" width="2.0" height="1.3"/><rect x="993.8" y="599.0" width="1.2" height="1.3"/><rect x="995.5" y="599.0" width="1.5" height="1.3"/><rect x="998.0" y="599.0" width="2.0" height="1.3"/></g>
<g fill="#222" opacity="0.65"><rect x="1010.0" y="599.0" width="2.0" height="1.3"/><rect x="1012.8" y="599.0" width="2.0" height="1.3"/><rect x="1015.8" y="599.0" width="1.2" height="1.3"/><rect x="1018.0" y="599.0" width="1.2" height="1.3"/><rect x="1020.0" y="599.0" width="1.5" height="1.3"/><rect x="1022.3" y="599.0" width="1.2" height="1.3"/><rect x="1024.5" y="599.0" width="1.2" height="1.3"/><rect x="1026.5" y="599.0" width="0.5" height="1.3"/></g>
<g fill="#222" opacity="0.65"><rect x="1016.0" y="604.5" width="1.2" height="1.3"/><rect x="1018.7" y="604.5" width="2.5" height="1.3"/><rect x="1022.2" y="604.5" width="1.2" height="1.3"/><rect x="1024.2" y="604.5" width="1.0" height="1.3"/><rect x="1025.7" y="604.5" width="1.3" height="1.3"/></g>
<g fill="#222" opacity="0.65"><rect x="1008.0" y="615.5" width="2.5" height="1.3"/><rect x="1012.0" y="615.5" width="2.0" height="1.3"/><rect x="1015.0" y="615.5" width="2.5" height="1.3"/><rect x="1018.5" y="615.5" width="1.2" height="1.3"/><rect x="1021.2" y="615.5" width="1.0" height="1.3"/><rect x="1022.7" y="615.5" width="2.5" height="1.3"/><rect x="1026.7" y="615.5" width="0.3" height="1.3"/></g>
<g fill="#222" opacity="0.65"><rect x="1048.0" y="599.0" width="2.5" height="1.3"/><rect x="1051.5" y="599.0" width="1.2" height="1.3"/><rect x="1054.2" y="599.0" width="1.5" height="1.3"/><rect x="1056.2" y="599.0" width="2.0" height="1.3"/><rect x="1058.7" y="599.0" width="1.0" height="1.3"/></g>
<g fill="#222" opacity="0.65"><rect x="1044.0" y="615.5" width="1.0" height="1.3"/><rect x="1045.5" y="615.5" width="1.5" height="1.3"/><rect x="1048.5" y="615.5" width="1.2" height="1.3"/><rect x="1050.7" y="615.5" width="1.0" height="1.3"/><rect x="1052.7" y="615.5" width="1.0" height="1.3"/><rect x="1054.2" y="615.5" width="2.5" height="1.3"/><rect x="1058.2" y="615.5" width="1.2" height="1.3"/></g>
<g fill="#222" opacity="0.65"><rect x="905.0" y="621.5" width="1.0" height="1.3"/><rect x="907.0" y="621.5" width="1.0" height="1.3"/><rect x="908.5" y="621.5" width="2.5" height="1.3"/><rect x="912.0" y="621.5" width="2.0" height="1.3"/><rect x="914.8" y="621.5" width="1.5" height="1.3"/><rect x="917.8" y="621.5" width="2.0" height="1.3"/><rect x="920.6" y="621.5" width="2.5" height="1.3"/><rect x="923.9" y="621.5" width="1.5" height="1.3"/><rect x="925.9" y="621.5" width="1.2" height="1.3"/><rect x="927.6" y="621.5" width="1.5" height="1.3"/><rect x="929.6" y="621.5" width="2.5" height="1.3"/><rect x="932.9" y="621.5" width="1.2" height="1.3"/></g>
<g fill="#222" opacity="0.65"><rect x="891.0" y="627.5" width="1.0" height="1.3"/><rect x="893.5" y="627.5" width="1.5" height="1.3"/><rect x="895.5" y="627.5" width="1.5" height="1.3"/><rect x="897.8" y="627.5" width="2.5" height="1.3"/><rect x="900.8" y="627.5" width="1.5" height="1.3"/><rect x="903.3" y="627.5" width="2.5" height="1.3"/><rect x="906.3" y="627.5" width="1.2" height="1.3"/></g>
<g fill="#222" opacity="0.65"><rect x="890.0" y="632.5" width="2.0" height="1.3"/><rect x="893.0" y="632.5" width="2.0" height="1.3"/><rect x="895.8" y="632.5" width="1.0" height="1.3"/><rect x="897.3" y="632.5" width="2.5" height="1.3"/><rect x="901.3" y="632.5" width="2.0" height="1.3"/><rect x="903.8" y="632.5" width="2.5" height="1.3"/><rect x="906.8" y="632.5" width="1.5" height="1.3"/><rect x="909.1" y="632.5" width="0.9" height="1.3"/></g>
<g fill="#222" opacity="0.65"><rect x="896.0" y="637.5" width="2.0" height="1.3"/><rect x="899.5" y="637.5" width="1.2" height="1.3"/><rect x="901.5" y="637.5" width="1.0" height="1.3"/><rect x="903.0" y="637.5" width="1.0" height="1.3"/><rect x="904.5" y="637.5" width="1.5" height="1.3"/><rect x="907.5" y="637.5" width="2.0" height="1.3"/></g>
<g fill="#222" opacity="0.65"><rect x="967.0" y="654.5" width="1.2" height="1.3"/><rect x="969.0" y="654.5" width="2.0" height="1.3"/><rect x="971.8" y="654.5" width="2.0" height="1.3"/><rect x="974.8" y="654.5" width="1.2" height="1.3"/><rect x="977.5" y="654.5" width="2.5" height="1.3"/><rect x="981.0" y="654.5" width="2.5" height="1.3"/><rect x="985.0" y="654.5" width="1.5" height="1.3"/><rect x="987.5" y="654.5" width="1.0" height="1.3"/><rect x="989.0" y="654.5" width="1.0" height="1.3"/><rect x="991.0" y="654.5" width="2.5" height="1.3"/><rect x="994.3" y="654.5" width="2.5" height="1.3"/><rect x="997.3" y="654.5" width="1.0" height="1.3"/><rect x="999.8" y="654.5" width="1.2" height="1.3"/><rect x="1002.5" y="654.5" width="2.5" height="1.3"/><rect x="1006.5" y="654.5" width="1.0" height="1.3"/><rect x="1008.3" y="654.5" width="1.2" height="1.3"/><rect x="1010.3" y="654.5" width="1.0" height="1.3"/><rect x="1012.8" y="654.5" width="2.5" height="1.3"/><rect x="1016.8" y="654.5" width="1.0" height="1.3"/><rect x="1018.6" y="654.5" width="2.0" height="1.3"/><rect x="1021.4" y="654.5" width="0.6" height="1.3"/></g>
<g stroke="#111" stroke-width="1" fill="none">
<path d="M1063.5 411V417.5"/>
<path d="M886 460.5H1063.5"/>
<path d="M886 472.5H913M985 472.5H1004"/>
<path d="M916 488.5H980M1006 488.5H1063.5M916 504.5H980M1006 504.5H1063.5"/>
<path d="M886.5 520.5H1063.5M886.5 526.5H1063.5M886.5 520.5V596.5M1063.5 520.5V619.5M1006.5 520.5V526.5"/>
<path d="M1028.5 596.5H1063.5M1028.5 604.5H1063.5M1028.5 613.5H1063.5M1028.5 619.5H1063.5M1028.5 613.5V619.5"/>
<rect x="886.5" y="619.5" width="75" height="26"/>
</g>
<g stroke="#bbb" stroke-width="1" fill="none"><path d="M1028.5 520.5V613"/><path d="M912 628.5H955M912 633.5H955M886.5 624.5H961.5"/></g>
</svg>
<!-- thumbnails -->
<div class="abs" style="left:1097px;top:206px;width:39px;height:50px;background:#b3fca8;border:1px solid #5e9fe0"></div><svg class="abs" style="left:1094px;top:200px" width="46" height="70" viewBox="1094 200 46 70"><rect x="1100" y="216" width="29.5" height="1" fill="#222"/><rect x="1100" y="227" width="30" height="1.5" fill="#1a3d1a"/><g fill="#111" opacity="0.8"><rect x="1101.0" y="209.5" width="1.5" height="1.5"/><rect x="1103.5" y="209.5" width="2" height="1.5"/><rect x="1106.1" y="209.5" width="1" height="1.5"/><rect x="1107.7" y="209.5" width="1.5" height="1.5"/></g><g fill="#111" opacity="0.6"><rect x="1116.0" y="209.5" width="2" height="1"/><rect x="1118.6" y="209.5" width="2" height="1"/><rect x="1122.1" y="209.5" width="1" height="1"/><rect x="1125.6" y="209.5" width="1.5" height="1"/><rect x="1127.7" y="209.5" width="1.5" height="1"/></g><g fill="#111" opacity="0.8"><rect x="1100.0" y="213.5" width="2" height="1.2"/><rect x="1103.0" y="213.5" width="1" height="1.2"/></g><g fill="#111" opacity="0.6"><rect x="1102.0" y="221.0" width="1" height="1"/><rect x="1104.5" y="221.0" width="1" height="1"/><rect x="1106.5" y="221.0" width="2" height="1"/></g><g fill="#111" opacity="0.6"><rect x="1103.0" y="223.5" width="1.5" height="1"/><rect x="1107.0" y="223.5" width="2" height="1"/></g><g fill="#111" opacity="0.6"><rect x="1117.0" y="221.0" width="1" height="1"/><rect x="1119.5" y="221.0" width="2" height="1"/><rect x="1123.0" y="221.0" width="1" height="1"/><rect x="1125.0" y="221.0" width="1" height="1"/></g><g fill="#111" opacity="0.7"><rect x="1120.0" y="224.0" width="1.5" height="1"/><rect x="1124.0" y="224.0" width="1" height="1"/><rect x="1127.5" y="224.0" width="1.5" height="1"/></g><g fill="#111" opacity="0.6"><rect x="1100.0" y="240.0" width="1" height="1"/><rect x="1103.5" y="240.0" width="2" height="1"/><rect x="1108.0" y="240.0" width="1.5" height="1"/><rect x="1112.0" y="240.0" width="1" height="1"/><rect x="1114.5" y="240.0" width="1" height="1"/><rect x="1116.5" y="240.0" width="1" height="1"/></g><g fill="#111" opacity="0.5"><rect x="1121.0" y="241.0" width="1.5" height="1"/><rect x="1124.0" y="241.0" width="1" height="1"/><rect x="1126.5" y="241.0" width="1.5" height="1"/></g><g fill="#111" opacity="0.6"><rect x="1105.0" y="244.0" width="1" height="1"/><rect x="1107.5" y="244.0" width="1.5" height="1"/><rect x="1109.6" y="244.0" width="1" height="1"/></g><rect x="1105" y="247" width="6" height="1" fill="#333"/></svg>
<div class="abs" style="left:1098px;top:274px;width:36px;height:47px;background:#fff"></div><svg class="abs" style="left:1094px;top:268px" width="46" height="60" viewBox="1094 268 46 60"><g fill="#111" opacity="0.7"><rect x="1100.0" y="277.0" width="1" height="1.5"/><rect x="1103.5" y="277.0" width="1" height="1.5"/></g><g fill="#111" opacity="0.6"><rect x="1100.0" y="280.0" width="1.5" height="1"/><rect x="1102.5" y="280.0" width="1" height="1"/></g><rect x="1126" y="276" width="5" height="1" fill="#333"/><rect x="1100" y="284" width="31" height="1" fill="#444"/><g fill="#111" opacity="0.6"><rect x="1100.0" y="286.5" width="1" height="1"/><rect x="1103.5" y="286.5" width="2" height="1"/></g><g fill="#111" opacity="0.5"><rect x="1107.0" y="289.0" width="1.5" height="1"/><rect x="1109.1" y="289.0" width="1" height="1"/><rect x="1111.6" y="289.0" width="1.5" height="1"/></g><g fill="#111" opacity="0.7"><rect x="1117.0" y="286.5" width="1" height="1"/><rect x="1119.0" y="286.5" width="1" height="1"/></g><g fill="#111" opacity="0.5"><rect x="1120.0" y="289.0" width="2" height="1"/><rect x="1123.5" y="289.0" width="2" height="1"/><rect x="1126.5" y="289.0" width="1.5" height="1"/><rect x="1129.0" y="289.0" width="2" height="1"/></g><g fill="#111" opacity="0.6"><rect x="1104.0" y="295.0" width="2" height="1"/></g><g fill="#111" opacity="0.6"><rect x="1117.0" y="295.0" width="2" height="1"/></g><rect x="1100" y="312" width="14" height="1" fill="#333"/><rect x="1113.5" y="309" width="1" height="7" fill="#333"/><g fill="#111" opacity="0.6"><rect x="1100.0" y="310.0" width="2" height="1"/><rect x="1103.0" y="310.0" width="1.5" height="1"/><rect x="1106.0" y="310.0" width="2" height="1"/></g><g fill="#111" opacity="0.6"><rect x="1122.0" y="309.0" width="2" height="1"/><rect x="1125.0" y="309.0" width="1.5" height="1"/><rect x="1129.0" y="309.0" width="2" height="1"/></g></svg>
<div class="abs" style="left:1098px;top:341px;width:36px;height:47px;background:#fff"></div><svg class="abs" style="left:1094px;top:335px" width="46" height="60" viewBox="1094 335 46 60"><g fill="#111" opacity="0.7"><rect x="1100.0" y="346.0" width="1" height="1.5"/><rect x="1102.0" y="346.0" width="1" height="1.5"/><rect x="1103.6" y="346.0" width="1" height="1.5"/><rect x="1105.2" y="346.0" width="2" height="1.5"/></g><g fill="#111" opacity="0.7"><rect x="1100.0" y="349.0" width="1" height="1.2"/><rect x="1101.6" y="349.0" width="1" height="1.2"/><rect x="1103.2" y="349.0" width="1" height="1.2"/><rect x="1105.7" y="349.0" width="1" height="1.2"/></g><g fill="#111" opacity="0.5"><rect x="1126.0" y="344.0" width="1" height="1"/></g><rect x="1104" y="355" width="9" height="1" fill="#333"/><rect x="1122" y="355" width="9" height="1" fill="#333"/><g fill="#111" opacity="0.55"><rect x="1103.0" y="362.0" width="1" height="1.2"/><rect x="1105.5" y="362.0" width="2" height="1.2"/><rect x="1110.0" y="362.0" width="1" height="1.2"/><rect x="1112.0" y="362.0" width="2" height="1.2"/><rect x="1115.5" y="362.0" width="1" height="1.2"/><rect x="1117.5" y="362.0" width="1" height="1.2"/><rect x="1120.0" y="362.0" width="1.5" height="1.2"/><rect x="1123.0" y="362.0" width="1" height="1.2"/><rect x="1126.5" y="362.0" width="1" height="1.2"/><rect x="1130.0" y="362.0" width="1" height="1.2"/></g><rect x="1100" y="374" width="31" height="1" fill="#222"/><g fill="#111" opacity="0.7"><rect x="1100.0" y="380.0" width="1" height="1.2"/><rect x="1101.6" y="380.0" width="1" height="1.2"/><rect x="1103.6" y="380.0" width="2" height="1.2"/><rect x="1106.6" y="380.0" width="2" height="1.2"/></g><rect x="1113" y="377" width="1" height="6" fill="#333"/><g fill="#111" opacity="0.5"><rect x="1122.0" y="377.0" width="1" height="1"/><rect x="1124.0" y="377.0" width="1" height="1"/><rect x="1126.0" y="377.0" width="2" height="1"/><rect x="1129.0" y="377.0" width="2" height="1"/></g></svg>
<div class="abs" style="left:1098px;top:408px;width:36px;height:47px;background:#fff"></div><svg class="abs" style="left:1094px;top:402px" width="46" height="60" viewBox="1094 402 46 60"><g fill="#111" opacity="0.7"><rect x="1101.0" y="412.0" width="1" height="1"/><rect x="1104.5" y="412.0" width="2" height="1"/></g><g fill="#111" opacity="0.6"><rect x="1100.0" y="417.0" width="1" height="1"/><rect x="1103.5" y="417.0" width="1.5" height="1"/></g><rect x="1105" y="423" width="24" height="1" fill="#999"/><g fill="#111" opacity="0.6"><rect x="1115.0" y="420.0" width="2" height="1"/><rect x="1118.0" y="420.0" width="2" height="1"/></g><g fill="#111" opacity="0.55"><rect x="1103.0" y="430.0" width="1" height="1.2"/><rect x="1104.6" y="430.0" width="2" height="1.2"/><rect x="1107.2" y="430.0" width="1" height="1.2"/><rect x="1109.7" y="430.0" width="1" height="1.2"/><rect x="1113.2" y="430.0" width="2" height="1.2"/><rect x="1116.7" y="430.0" width="1" height="1.2"/><rect x="1118.3" y="430.0" width="1" height="1.2"/><rect x="1121.8" y="430.0" width="1" height="1.2"/><rect x="1124.3" y="430.0" width="1" height="1.2"/><rect x="1125.9" y="430.0" width="1.5" height="1.2"/></g><rect x="1124" y="443.5" width="5" height="1" fill="#555"/><rect x="1112" y="445" width="1" height="5" fill="#999"/><g fill="#111" opacity="0.7"><rect x="1100.0" y="448.0" width="2" height="1"/><rect x="1102.6" y="448.0" width="1" height="1"/></g><rect x="1113" y="451" width="10" height="1" fill="#555"/></svg>
<div class="abs" style="left:1098px;top:475px;width:36px;height:47px;background:#fff"></div><svg class="abs" style="left:1094px;top:469px" width="46" height="60" viewBox="1094 469 46 60"><g fill="#111" opacity="0.8"><rect x="1100.0" y="479.0" width="2" height="1.5"/><rect x="1102.6" y="479.0" width="2" height="1.5"/><rect x="1105.6" y="479.0" width="1.5" height="1.5"/></g><g fill="#111" opacity="0.6"><rect x="1118.0" y="479.0" width="1" height="1"/><rect x="1120.5" y="479.0" width="1" height="1"/></g><g fill="#111" opacity="0.6"><rect x="1125.0" y="479.0" width="1.5" height="1"/><rect x="1127.1" y="479.0" width="2" height="1"/></g><g fill="#111" opacity="0.6"><rect x="1101.0" y="484.0" width="1" height="1"/></g><g fill="#111" opacity="0.6"><rect x="1100.0" y="488.0" width="1.5" height="1"/><rect x="1102.1" y="488.0" width="1" height="1"/><rect x="1105.6" y="488.0" width="1" height="1"/><rect x="1109.1" y="488.0" width="1" height="1"/><rect x="1110.7" y="488.0" width="1.5" height="1"/><rect x="1112.8" y="488.0" width="1" height="1"/><rect x="1114.8" y="488.0" width="2" height="1"/><rect x="1117.8" y="488.0" width="1" height="1"/><rect x="1119.8" y="488.0" width="1.5" height="1"/><rect x="1122.3" y="488.0" width="1" height="1"/></g><g fill="#111" opacity="0.8"><rect x="1104.0" y="492.0" width="2" height="1.3"/><rect x="1106.6" y="492.0" width="1" height="1.3"/><rect x="1108.6" y="492.0" width="1.5" height="1.3"/><rect x="1112.6" y="492.0" width="1" height="1.3"/><rect x="1114.2" y="492.0" width="1" height="1.3"/><rect x="1115.8" y="492.0" width="1" height="1.3"/><rect x="1119.3" y="492.0" width="1" height="1.3"/><rect x="1122.8" y="492.0" width="2" height="1.3"/><rect x="1127.3" y="492.0" width="2" height="1.3"/></g><g fill="#111" opacity="0.6"><rect x="1101.0" y="496.0" width="1" height="1.2"/><rect x="1103.0" y="496.0" width="1.5" height="1.2"/><rect x="1105.1" y="496.0" width="1" height="1.2"/><rect x="1107.6" y="496.0" width="1" height="1.2"/><rect x="1109.6" y="496.0" width="2" height="1.2"/><rect x="1112.2" y="496.0" width="2" height="1.2"/><rect x="1114.8" y="496.0" width="1.5" height="1.2"/><rect x="1117.3" y="496.0" width="2" height="1.2"/><rect x="1121.8" y="496.0" width="1.5" height="1.2"/><rect x="1124.8" y="496.0" width="1" height="1.2"/><rect x="1127.3" y="496.0" width="1" height="1.2"/><rect x="1129.8" y="496.0" width="1" height="1.2"/></g><g fill="#111" opacity="0.5"><rect x="1103.0" y="505.0" width="1" height="1"/><rect x="1104.6" y="505.0" width="1" height="1"/><rect x="1106.2" y="505.0" width="1" height="1"/><rect x="1107.8" y="505.0" width="2" height="1"/><rect x="1110.8" y="505.0" width="2" height="1"/><rect x="1115.3" y="505.0" width="1.5" height="1"/><rect x="1118.3" y="505.0" width="2" height="1"/><rect x="1122.8" y="505.0" width="1" height="1"/><rect x="1126.3" y="505.0" width="1" height="1"/><rect x="1127.9" y="505.0" width="2" height="1"/></g><rect x="1100" y="509.5" width="13" height="1" fill="#222"/><rect x="1113" y="509" width="1" height="8" fill="#222"/><rect x="1126" y="512" width="5" height="1.5" fill="#222"/><g fill="#111" opacity="0.6"><rect x="1115.0" y="518.0" width="1" height="1"/><rect x="1117.0" y="518.0" width="1" height="1"/><rect x="1120.5" y="518.0" width="1.5" height="1"/><rect x="1122.6" y="518.0" width="1.5" height="1"/></g></svg>
<div class="t thl" style="top:257px">1</div><div class="t thl" style="top:324px">2</div><div class="t thl" style="top:391px">3</div><div class="t thl" style="top:458px">4</div><div class="t thl" style="top:525px">5</div>
</body></html>
